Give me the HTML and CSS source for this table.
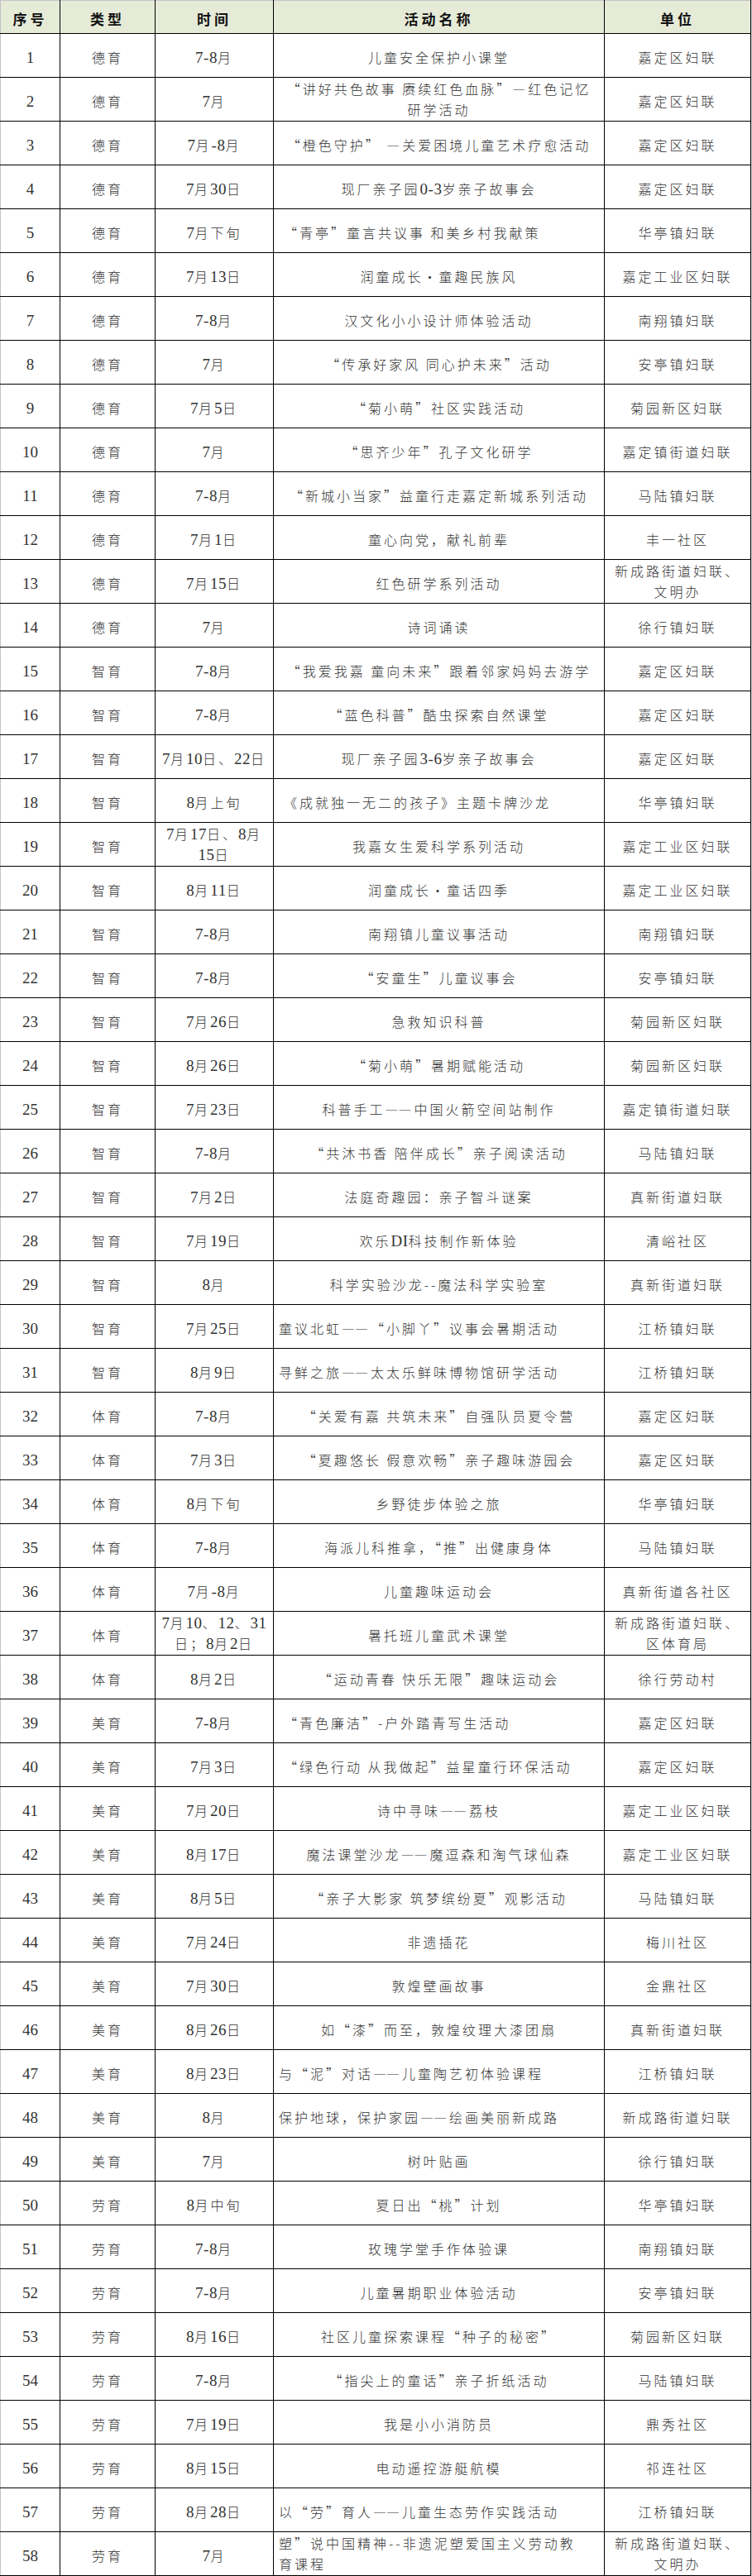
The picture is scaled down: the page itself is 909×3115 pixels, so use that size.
FILE: index.html
```html
<!DOCTYPE html>
<html lang="zh-CN">
<head>
<meta charset="utf-8">
<title>暑期活动表</title>
<link rel="stylesheet" href="styles.css">
</head>
<body>
<table class="sheet">
<colgroup><col class="c1"><col class="c2"><col class="c3"><col class="c4"><col class="c5"></colgroup>
<thead>
<tr><th>序号</th><th>类型</th><th>时间</th><th>活动名称</th><th>单位</th></tr>
</thead>
<tbody>
<tr><td class="i">1</td><td class="t">德育</td><td class="d"><span class="n">7-8</span>月</td><td class="a">儿童安全保护小课堂</td><td class="u">嘉定区妇联</td></tr>
<tr><td class="i">2</td><td class="t">德育</td><td class="d"><span class="n">7</span>月</td><td class="a m">“讲好共色故事 赓续红色血脉”—红色记忆<br>研学活动</td><td class="u">嘉定区妇联</td></tr>
<tr><td class="i">3</td><td class="t">德育</td><td class="d"><span class="n">7</span>月<span class="n">-8</span>月</td><td class="a">“橙色守护” —关爱困境儿童艺术疗愈活动</td><td class="u">嘉定区妇联</td></tr>
<tr><td class="i">4</td><td class="t">德育</td><td class="d"><span class="n">7</span>月<span class="n">30</span>日</td><td class="a">现厂亲子园<span class="n">0-3</span>岁亲子故事会</td><td class="u">嘉定区妇联</td></tr>
<tr><td class="i">5</td><td class="t">德育</td><td class="d"><span class="n">7</span>月下旬</td><td class="a l">“青亭”童言共议事 和美乡村我献策</td><td class="u">华亭镇妇联</td></tr>
<tr><td class="i">6</td><td class="t">德育</td><td class="d"><span class="n">7</span>月<span class="n">13</span>日</td><td class="a">润童成长•童趣民族风</td><td class="u">嘉定工业区妇联</td></tr>
<tr><td class="i">7</td><td class="t">德育</td><td class="d"><span class="n">7-8</span>月</td><td class="a">汉文化小小设计师体验活动</td><td class="u">南翔镇妇联</td></tr>
<tr><td class="i">8</td><td class="t">德育</td><td class="d"><span class="n">7</span>月</td><td class="a">“传承好家风 同心护未来”活动</td><td class="u">安亭镇妇联</td></tr>
<tr><td class="i">9</td><td class="t">德育</td><td class="d"><span class="n">7</span>月<span class="n">5</span>日</td><td class="a">“菊小萌”社区实践活动</td><td class="u">菊园新区妇联</td></tr>
<tr><td class="i">10</td><td class="t">德育</td><td class="d"><span class="n">7</span>月</td><td class="a">“思齐少年”孔子文化研学</td><td class="u">嘉定镇街道妇联</td></tr>
<tr><td class="i">11</td><td class="t">德育</td><td class="d"><span class="n">7-8</span>月</td><td class="a">“新城小当家”益童行走嘉定新城系列活动</td><td class="u">马陆镇妇联</td></tr>
<tr><td class="i">12</td><td class="t">德育</td><td class="d"><span class="n">7</span>月<span class="n">1</span>日</td><td class="a">童心向党，献礼前辈</td><td class="u">丰一社区</td></tr>
<tr><td class="i">13</td><td class="t">德育</td><td class="d"><span class="n">7</span>月<span class="n">15</span>日</td><td class="a">红色研学系列活动</td><td class="u m">新成路街道妇联、<br>文明办</td></tr>
<tr><td class="i">14</td><td class="t">德育</td><td class="d"><span class="n">7</span>月</td><td class="a">诗词诵读</td><td class="u">徐行镇妇联</td></tr>
<tr><td class="i">15</td><td class="t">智育</td><td class="d"><span class="n">7-8</span>月</td><td class="a">“我爱我嘉 童向未来”跟着邻家妈妈去游学</td><td class="u">嘉定区妇联</td></tr>
<tr><td class="i">16</td><td class="t">智育</td><td class="d"><span class="n">7-8</span>月</td><td class="a">“蓝色科普”酷虫探索自然课堂</td><td class="u">嘉定区妇联</td></tr>
<tr><td class="i">17</td><td class="t">智育</td><td class="d"><span class="n">7</span>月<span class="n">10</span>日、<span class="n">22</span>日</td><td class="a">现厂亲子园<span class="n">3-6</span>岁亲子故事会</td><td class="u">嘉定区妇联</td></tr>
<tr><td class="i">18</td><td class="t">智育</td><td class="d"><span class="n">8</span>月上旬</td><td class="a l">《成就独一无二的孩子》主题卡牌沙龙</td><td class="u">华亭镇妇联</td></tr>
<tr><td class="i">19</td><td class="t">智育</td><td class="d m"><span class="n">7</span>月<span class="n">17</span>日、<span class="n">8</span>月<br><span class="n">15</span>日</td><td class="a">我嘉女生爱科学系列活动</td><td class="u">嘉定工业区妇联</td></tr>
<tr><td class="i">20</td><td class="t">智育</td><td class="d"><span class="n">8</span>月<span class="n">11</span>日</td><td class="a">润童成长•童话四季</td><td class="u">嘉定工业区妇联</td></tr>
<tr><td class="i">21</td><td class="t">智育</td><td class="d"><span class="n">7-8</span>月</td><td class="a">南翔镇儿童议事活动</td><td class="u">南翔镇妇联</td></tr>
<tr><td class="i">22</td><td class="t">智育</td><td class="d"><span class="n">7-8</span>月</td><td class="a">“安童生”儿童议事会</td><td class="u">安亭镇妇联</td></tr>
<tr><td class="i">23</td><td class="t">智育</td><td class="d"><span class="n">7</span>月<span class="n">26</span>日</td><td class="a">急救知识科普</td><td class="u">菊园新区妇联</td></tr>
<tr><td class="i">24</td><td class="t">智育</td><td class="d"><span class="n">8</span>月<span class="n">26</span>日</td><td class="a">“菊小萌”暑期赋能活动</td><td class="u">菊园新区妇联</td></tr>
<tr><td class="i">25</td><td class="t">智育</td><td class="d"><span class="n">7</span>月<span class="n">23</span>日</td><td class="a">科普手工<span class="j">—</span>—中国火箭空间站制作</td><td class="u">嘉定镇街道妇联</td></tr>
<tr><td class="i">26</td><td class="t">智育</td><td class="d"><span class="n">7-8</span>月</td><td class="a">“共沐书香 陪伴成长”亲子阅读活动</td><td class="u">马陆镇妇联</td></tr>
<tr><td class="i">27</td><td class="t">智育</td><td class="d"><span class="n">7</span>月<span class="n">2</span>日</td><td class="a">法庭奇趣园：亲子智斗谜案</td><td class="u">真新街道妇联</td></tr>
<tr><td class="i">28</td><td class="t">智育</td><td class="d"><span class="n">7</span>月<span class="n">19</span>日</td><td class="a">欢乐<span class="n">DI</span>科技制作新体验</td><td class="u">清峪社区</td></tr>
<tr><td class="i">29</td><td class="t">智育</td><td class="d"><span class="n">8</span>月</td><td class="a">科学实验沙龙--魔法科学实验室</td><td class="u">真新街道妇联</td></tr>
<tr><td class="i">30</td><td class="t">智育</td><td class="d"><span class="n">7</span>月<span class="n">25</span>日</td><td class="a l2">童议北虹<span class="j">—</span>—“小脚丫”议事会暑期活动</td><td class="u">江桥镇妇联</td></tr>
<tr><td class="i">31</td><td class="t">智育</td><td class="d"><span class="n">8</span>月<span class="n">9</span>日</td><td class="a l2">寻鲜之旅<span class="j">—</span>—太太乐鲜味博物馆研学活动</td><td class="u">江桥镇妇联</td></tr>
<tr><td class="i">32</td><td class="t">体育</td><td class="d"><span class="n">7-8</span>月</td><td class="a">“关爱有嘉 共筑未来”自强队员夏令营</td><td class="u">嘉定区妇联</td></tr>
<tr><td class="i">33</td><td class="t">体育</td><td class="d"><span class="n">7</span>月<span class="n">3</span>日</td><td class="a">“夏趣悠长 假意欢畅”亲子趣味游园会</td><td class="u">嘉定区妇联</td></tr>
<tr><td class="i">34</td><td class="t">体育</td><td class="d"><span class="n">8</span>月下旬</td><td class="a">乡野徒步体验之旅</td><td class="u">华亭镇妇联</td></tr>
<tr><td class="i">35</td><td class="t">体育</td><td class="d"><span class="n">7-8</span>月</td><td class="a">海派儿科推拿，“推”出健康身体</td><td class="u">马陆镇妇联</td></tr>
<tr><td class="i">36</td><td class="t">体育</td><td class="d"><span class="n">7</span>月<span class="n">-8</span>月</td><td class="a">儿童趣味运动会</td><td class="u">真新街道各社区</td></tr>
<tr><td class="i">37</td><td class="t">体育</td><td class="d m"><span class="n">7</span>月<span class="n">10</span>、<span class="n">12</span>、<span class="n">31</span><br>日；<span class="n">8</span>月<span class="n">2</span>日</td><td class="a">暑托班儿童武术课堂</td><td class="u m">新成路街道妇联、<br>区体育局</td></tr>
<tr><td class="i">38</td><td class="t">体育</td><td class="d"><span class="n">8</span>月<span class="n">2</span>日</td><td class="a">“运动青春 快乐无限”趣味运动会</td><td class="u">徐行劳动村</td></tr>
<tr><td class="i">39</td><td class="t">美育</td><td class="d"><span class="n">7-8</span>月</td><td class="a l">“青色廉洁”-户外踏青写生活动</td><td class="u">嘉定区妇联</td></tr>
<tr><td class="i">40</td><td class="t">美育</td><td class="d"><span class="n">7</span>月<span class="n">3</span>日</td><td class="a l">“绿色行动 从我做起”益星童行环保活动</td><td class="u">嘉定区妇联</td></tr>
<tr><td class="i">41</td><td class="t">美育</td><td class="d"><span class="n">7</span>月<span class="n">20</span>日</td><td class="a">诗中寻味<span class="j">—</span>—荔枝</td><td class="u">嘉定工业区妇联</td></tr>
<tr><td class="i">42</td><td class="t">美育</td><td class="d"><span class="n">8</span>月<span class="n">17</span>日</td><td class="a">魔法课堂沙龙<span class="j">—</span>—魔逗森和淘气球仙森</td><td class="u">嘉定工业区妇联</td></tr>
<tr><td class="i">43</td><td class="t">美育</td><td class="d"><span class="n">8</span>月<span class="n">5</span>日</td><td class="a">“亲子大影家 筑梦缤纷夏”观影活动</td><td class="u">马陆镇妇联</td></tr>
<tr><td class="i">44</td><td class="t">美育</td><td class="d"><span class="n">7</span>月<span class="n">24</span>日</td><td class="a">非遗插花</td><td class="u">梅川社区</td></tr>
<tr><td class="i">45</td><td class="t">美育</td><td class="d"><span class="n">7</span>月<span class="n">30</span>日</td><td class="a">敦煌壁画故事</td><td class="u">金鼎社区</td></tr>
<tr><td class="i">46</td><td class="t">美育</td><td class="d"><span class="n">8</span>月<span class="n">26</span>日</td><td class="a">如“漆”而至，敦煌纹理大漆团扇</td><td class="u">真新街道妇联</td></tr>
<tr><td class="i">47</td><td class="t">美育</td><td class="d"><span class="n">8</span>月<span class="n">23</span>日</td><td class="a l2">与“泥”对话<span class="j">—</span>—儿童陶艺初体验课程</td><td class="u">江桥镇妇联</td></tr>
<tr><td class="i">48</td><td class="t">美育</td><td class="d"><span class="n">8</span>月</td><td class="a l2">保护地球，保护家园<span class="j">—</span>—绘画美丽新成路</td><td class="u">新成路街道妇联</td></tr>
<tr><td class="i">49</td><td class="t">美育</td><td class="d"><span class="n">7</span>月</td><td class="a">树叶贴画</td><td class="u">徐行镇妇联</td></tr>
<tr><td class="i">50</td><td class="t">劳育</td><td class="d"><span class="n">8</span>月中旬</td><td class="a">夏日出“桃”计划</td><td class="u">华亭镇妇联</td></tr>
<tr><td class="i">51</td><td class="t">劳育</td><td class="d"><span class="n">7-8</span>月</td><td class="a">玫瑰学堂手作体验课</td><td class="u">南翔镇妇联</td></tr>
<tr><td class="i">52</td><td class="t">劳育</td><td class="d"><span class="n">7-8</span>月</td><td class="a">儿童暑期职业体验活动</td><td class="u">安亭镇妇联</td></tr>
<tr><td class="i">53</td><td class="t">劳育</td><td class="d"><span class="n">8</span>月<span class="n">16</span>日</td><td class="a">社区儿童探索课程“种子的秘密”</td><td class="u">菊园新区妇联</td></tr>
<tr><td class="i">54</td><td class="t">劳育</td><td class="d"><span class="n">7-8</span>月</td><td class="a">“指尖上的童话”亲子折纸活动</td><td class="u">马陆镇妇联</td></tr>
<tr><td class="i">55</td><td class="t">劳育</td><td class="d"><span class="n">7</span>月<span class="n">19</span>日</td><td class="a">我是小小消防员</td><td class="u">鼎秀社区</td></tr>
<tr><td class="i">56</td><td class="t">劳育</td><td class="d"><span class="n">8</span>月<span class="n">15</span>日</td><td class="a">电动遥控游艇航模</td><td class="u">祁连社区</td></tr>
<tr><td class="i">57</td><td class="t">劳育</td><td class="d"><span class="n">8</span>月<span class="n">28</span>日</td><td class="a l2">以“劳”育人<span class="j">—</span>—儿童生态劳作实践活动</td><td class="u">江桥镇妇联</td></tr>
<tr><td class="i">58</td><td class="t">劳育</td><td class="d"><span class="n">7</span>月</td><td class="a l2 m">塑”说中国精神--非遗泥塑爱国主义劳动教<br>育课程</td><td class="u m">新成路街道妇联、<br>文明办</td></tr>
</tbody>
</table>
</body>
</html>
```

FILE: styles.css
```css
html, body {
  margin: 0;
  padding: 0;
}

body {
  background: #d6d6d6;
  width: 909px;
}

.sheet {
  border-collapse: collapse;
  table-layout: fixed;
  width: 907px;
  background: #ffffff;
  font-family: "Noto Sans CJK SC", "Noto Sans", sans-serif;
  font-size: 16px;
  font-weight: 300;
  letter-spacing: 3px;
  color: #333333;
}

.c1 { width: 72px; }
.c2 { width: 115px; }
.c3 { width: 143px; }
.c4 { width: 400px; }
.c5 { width: 177px; }

.sheet th,
.sheet td {
  border: 1px solid #000000;
  text-align: center;
  vertical-align: middle;
  line-height: 25px;
  padding: 4px 3px 0;
}

.sheet td.m {
  padding-top: 0;
  line-height: 25px;
}

.sheet thead tr {
  height: 40px;
}

.sheet tbody tr {
  height: 53px;
}

.sheet th {
  background: #e6ebd8;
  color: #111111;
  font-size: 17px;
  font-weight: 700;
  letter-spacing: 4px;
  padding-top: 3px;
  border-top-color: #c4c4c4;
}

.sheet th:first-child,
.sheet td:first-child {
  border-left-color: #c4c4c4;
}

.sheet .i {
  font-family: "Liberation Serif", serif;
  font-size: 19px;
  letter-spacing: 0;
  font-weight: 400;
}

.sheet .d {
  padding-left: 2px;
  padding-right: 2px;
}

.n {
  font-family: "Liberation Serif", serif;
  font-size: 19px;
  font-weight: 400;
  letter-spacing: 0.5px;
  line-height: 1;
}

.j {
  letter-spacing: 0;
}

.sheet .a.l {
  text-align: left;
  padding-left: 12px;
}

.sheet .a.l2 {
  text-align: left;
  padding-left: 6px;
}
```
